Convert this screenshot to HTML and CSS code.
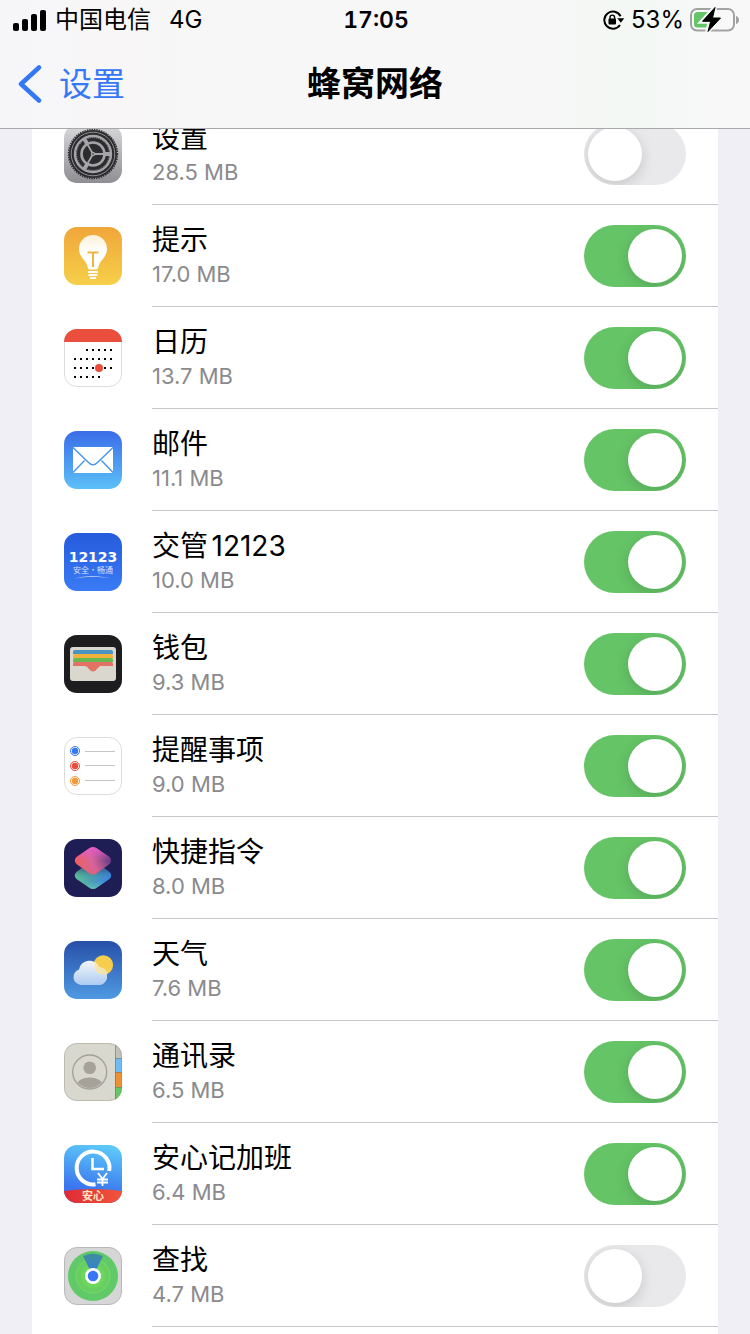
FILE: index.html
```html
<!DOCTYPE html>
<html lang="zh-CN">
<head>
  <meta charset="UTF-8">
  <meta name="viewport" content="width=device-width, initial-scale=1">
  <title>蜂窝网络</title>
  <link rel="stylesheet" href="styles.css">
</head>
<body>
  <header class="topbar">
    <div class="status">
      <div class="status-left">
        <svg class="signal" width="33" height="22" viewBox="0 0 33 22">
          <rect x="0" y="14" width="6" height="8" rx="2"/>
          <rect x="9" y="10" width="6" height="12" rx="2"/>
          <rect x="18" y="5" width="6" height="17" rx="2"/>
          <rect x="27" y="1" width="6" height="21" rx="2"/>
        </svg>
        <span>中国电信</span>
        <span class="network">4G</span>
      </div>
      <time class="clock">17:05</time>
      <div class="status-right">
        <svg width="22" height="20" viewBox="0 0 22 20">
          <path d="M17.6 6.300A8.600 8.600 0 1 0 17 15" fill="none" stroke="#000" stroke-width="2"/>
          <path d="M14.300 8.200h7L17.800 12.800z"/>
          <rect x="5.500" y="8.500" width="7.500" height="6" rx="1"/>
          <path d="M7 9V7.400a2.300 2.300 0 0 1 4.600 0V9" fill="none" stroke="#000" stroke-width="1.400"/>
        </svg>
        <span>53%</span>
        <svg width="49" height="26" viewBox="0 0 49 26">
          <rect x="1" y="2" width="43" height="21.500" rx="6" fill="none" stroke="#a1a3a2" stroke-width="2"/>
          <path d="M46 9q3 .8 3 4t-3 4z" fill="#a1a3a2"/>
          <rect x="4" y="5" width="20" height="15.500" rx="3.500" fill="#65c466"/>
          <path d="M25 0 11.500 14.800h8.200L17.200 25 31.500 10.500h-8.200z" stroke="#f6f9f6" stroke-width="4" fill="#f6f9f6"/>
          <path d="M25 .5 12.500 14.300h8.200L18 24.500 30.500 11h-8z" stroke="#000" stroke-width="1" stroke-linejoin="round"/>
        </svg>
      </div>
    </div>
    <nav class="nav">
      <a class="back" href="#">
        <svg width="24" height="40" viewBox="0 0 24 40">
          <path d="M21 3.500 3 20l18 16.500" fill="none" stroke="#3478f6" stroke-width="4.500" stroke-linecap="round" stroke-linejoin="round"/>
        </svg>
        设置
      </a>
      <h1>蜂窝网络</h1>
    </nav>
  </header>

  <ul class="apps">
    <li class="app">
      <svg class="icon" viewBox="0 0 58 58">
        <defs>
          <linearGradient id="gear-bg" x2="0" y2="1"><stop stop-color="#d9d9dc"/><stop offset="1" stop-color="#8e8e93"/></linearGradient>
        </defs>
        <rect width="58" height="58" rx="13" fill="url(#gear-bg)"/>
        <circle cx="29" cy="29" r="24" fill="#2c2c2e"/>
        <circle cx="29" cy="29" r="24.400" fill="none" stroke="#2c2c2e" stroke-width="1.600" stroke-dasharray="1.400 1"/>
        <circle cx="29" cy="29" r="21.800" fill="none" stroke="#8f8f93" stroke-width="1"/>
        <circle cx="29" cy="29" r="18" fill="none" stroke="#a5a5a9" stroke-width="2.400"/>
        <circle cx="29" cy="29" r="16.400" fill="none" stroke="#a5a5a9" stroke-width="1" stroke-dasharray=".9 1.100"/>
        <circle cx="29" cy="29" r="11.500" fill="none" stroke="#a5a5a9" stroke-width="2.600"/>
        <g stroke="#a5a5a9" stroke-width="1.800">
          <path d="M29 29h18M29 29l-9-15.600M29 29l-9 15.600"/>
          <path stroke-width="4" d="M41 29h5M23 18.600l-2.500-4.300M23 39.400l-2.500 4.300"/>
        </g>
        <circle cx="29" cy="29" r="2.200" fill="#a5a5a9"/>
        <circle cx="29" cy="29" r=".8" fill="#2c2c2e"/>
      </svg>
      <label class="info" for="app-settings"><span class="name">设置</span><span class="usage">28.5 MB</span></label>
      <input class="switch" id="app-settings" type="checkbox">
    </li>
    <li class="app">
      <svg class="icon" viewBox="0 0 58 58">
        <defs>
          <linearGradient id="tips-bg" x2="0" y2="1"><stop stop-color="#f0a63a"/><stop offset="1" stop-color="#f6cf49"/></linearGradient>
          <linearGradient id="tips-bulb" x2="0" y2="1"><stop stop-color="#fdf1d9"/><stop offset=".5" stop-color="#fff"/></linearGradient>
        </defs>
        <rect width="58" height="58" rx="13" fill="url(#tips-bg)"/>
        <path d="M29 8a14 14 0 0 0-14 14c0 8 7 11 8.500 17.500q.5 3 2.500 3h6q2 0 2.500-3C36 33 43 30 43 22A14 14 0 0 0 29 8z" fill="url(#tips-bulb)"/>
        <path d="M23.500 25.500h11M29 25.500v14.500" fill="none" stroke="#f1b63f" stroke-width="2"/>
        <path d="M24 45h10M24.500 48h9M26 51h6" stroke="#fff" stroke-width="2"/>
      </svg>
      <label class="info" for="app-tips"><span class="name">提示</span><span class="usage">17.0 MB</span></label>
      <input class="switch" id="app-tips" type="checkbox" checked>
    </li>
    <li class="app">
      <svg class="icon" viewBox="0 0 58 58">
        <rect x=".5" y=".5" width="57" height="57" rx="12.500" fill="#fff" stroke="#dcdcdc"/>
        <path d="M0 13A13 13 0 0 1 13 0h32a13 13 0 0 1 13 13z" fill="#e94f3c"/>
        <g stroke="#000" stroke-width="2" stroke-dasharray="2 4">
          <path d="M22 21h26M10 30h38M10 39h38M10 48h26"/>
        </g>
        <circle cx="35" cy="39" r="4" fill="#eb4d3d"/>
      </svg>
      <label class="info" for="app-calendar"><span class="name">日历</span><span class="usage">13.7 MB</span></label>
      <input class="switch" id="app-calendar" type="checkbox" checked>
    </li>
    <li class="app">
      <svg class="icon" viewBox="0 0 58 58">
        <defs>
          <linearGradient id="mail-bg" x2="0" y2="1"><stop stop-color="#3a6de8"/><stop offset="1" stop-color="#5cc0f8"/></linearGradient>
        </defs>
        <rect width="58" height="58" rx="13" fill="url(#mail-bg)"/>
        <rect x="9" y="16" width="40" height="26" rx="1" fill="#fff"/>
        <path d="m9 16.500 15.500 15q4.500 4.500 9 0l15.500-15M9 41.500l11.500-12M49 41.500l-11.500-12" fill="none" stroke="#4b96ef" stroke-width="1.500"/>
      </svg>
      <label class="info" for="app-mail"><span class="name">邮件</span><span class="usage">11.1 MB</span></label>
      <input class="switch" id="app-mail" type="checkbox" checked>
    </li>
    <li class="app">
      <svg class="icon" viewBox="0 0 58 58">
        <defs>
          <linearGradient id="traffic-bg" x2="0" y2="1"><stop stop-color="#255bdc"/><stop offset="1" stop-color="#3a7bf5"/></linearGradient>
        </defs>
        <rect width="58" height="58" rx="13" fill="url(#traffic-bg)"/>
        <text class="traffic-number" x="29" y="29" fill="#fff">12123</text>
        <text class="traffic-motto" x="29" y="40" fill="#d5e1fb">安全·畅通</text>
        <path d="M10 45.500q18-5 37 0-18-3.600-37 0z" fill="#d5e1fb"/>
      </svg>
      <label class="info" for="app-traffic"><span class="name">交管12123</span><span class="usage">10.0 MB</span></label>
      <input class="switch" id="app-traffic" type="checkbox" checked>
    </li>
    <li class="app">
      <svg class="icon" viewBox="0 0 58 58">
        <rect width="58" height="58" rx="13" fill="#1d1d1f"/>
        <rect x="6" y="12" width="46" height="34" rx="3" fill="#dad7ce"/>
        <path d="M9 19v-2q0-2 2-2h36q2 0 2 2v2z" fill="#4a94c4"/>
        <path d="M9 23v-2q0-2 2-2h36q2 0 2 2v2z" fill="#f2b13c"/>
        <path d="M9 27v-2q0-2 2-2h36q2 0 2 2v2z" fill="#67b84f"/>
        <path d="M9 31v-2q0-2 2-2h36q2 0 2 2v2H37q-2 0-3.500 2.500-4.500 6-9 0Q23 31 21 31z" fill="#e27364"/>
      </svg>
      <label class="info" for="app-wallet"><span class="name">钱包</span><span class="usage">9.3 MB</span></label>
      <input class="switch" id="app-wallet" type="checkbox" checked>
    </li>
    <li class="app">
      <svg class="icon" viewBox="0 0 58 58">
        <rect x=".5" y=".5" width="57" height="57" rx="12.500" fill="#fff" stroke="#dcdcdc"/>
        <g fill="none" stroke-width="1">
          <circle cx="11" cy="14" r="4.500" stroke="#3478f6"/>
          <circle cx="11" cy="29" r="4.500" stroke="#eb4d3d"/>
          <circle cx="11" cy="44" r="4.500" stroke="#f19a37"/>
        </g>
        <circle cx="11" cy="14" r="3.200" fill="#3478f6"/>
        <circle cx="11" cy="29" r="3.200" fill="#eb4d3d"/>
        <circle cx="11" cy="44" r="3.200" fill="#f19a37"/>
        <path d="M21 14.500h30M21 28.500h30M21 43.500h30" stroke="#c4c4c6"/>
      </svg>
      <label class="info" for="app-reminders"><span class="name">提醒事项</span><span class="usage">9.0 MB</span></label>
      <input class="switch" id="app-reminders" type="checkbox" checked>
    </li>
    <li class="app">
      <svg class="icon" viewBox="0 0 58 58">
        <defs>
          <linearGradient id="cut-bottom" x1="0" y1=".3" x2="1" y2=".5"><stop stop-color="#5ecb94"/><stop offset=".45" stop-color="#4e9cb0"/><stop offset="1" stop-color="#3478f6"/></linearGradient>
          <linearGradient id="cut-shade" x2="0" y2="1"><stop offset=".3" stop-color="#33507e" stop-opacity=".6"/><stop offset=".7" stop-color="#58d0a0" stop-opacity=".1"/><stop offset="1" stop-color="#7be0a8" stop-opacity=".6"/></linearGradient>
          <linearGradient id="cut-top" x1="0" y1=".7" x2="1" y2=".5"><stop stop-color="#f0604f"/><stop offset=".5" stop-color="#d7659a"/><stop offset="1" stop-color="#5c3a80"/></linearGradient>
          <linearGradient id="cut-glow" x2="0" y2="1"><stop stop-color="#e85bc8"/><stop offset=".5" stop-color="#e85bc8" stop-opacity="0"/><stop offset="1" stop-color="#e0625c" stop-opacity=".5"/></linearGradient>
        </defs>
        <rect width="58" height="58" rx="13" fill="#1e1e54"/>
        <path d="M25 24 12.500 33q-3.500 3.500 0 7L25 48.500q4 3 8 0L45.500 40q3.500-3.500 0-7L33 24q-4-3-8 0z" fill="url(#cut-bottom)"/>
        <path d="M25 24 12.500 33q-3.500 3.500 0 7L25 48.500q4 3 8 0L45.500 40q3.500-3.500 0-7L33 24q-4-3-8 0z" fill="url(#cut-shade)"/>
        <path d="M25 9.500 12.500 18q-3.500 3.500 0 7L25 34q4 3 8 0l12.500-9q3.500-3.500 0-7L33 9.500q-4-3-8 0z" fill="url(#cut-top)"/>
        <path d="M25 9.500 12.500 18q-3.500 3.500 0 7L25 34q4 3 8 0l12.500-9q3.500-3.500 0-7L33 9.500q-4-3-8 0z" fill="url(#cut-glow)"/>
      </svg>
      <label class="info" for="app-shortcuts"><span class="name">快捷指令</span><span class="usage">8.0 MB</span></label>
      <input class="switch" id="app-shortcuts" type="checkbox" checked>
    </li>
    <li class="app">
      <svg class="icon" viewBox="0 0 58 58">
        <defs>
          <linearGradient id="sky" x2="0" y2="1"><stop stop-color="#2750a8"/><stop offset="1" stop-color="#4f9ae2"/></linearGradient>
          <linearGradient id="cloud" x2="0" y2="1"><stop stop-color="#fff"/><stop offset="1" stop-color="#b4d0f2"/></linearGradient>
        </defs>
        <rect width="58" height="58" rx="13" fill="url(#sky)"/>
        <circle cx="39.300" cy="24" r="9.800" fill="#f6cd4c"/>
        <path d="M17 44a8 8 0 0 1-2-15.600A10.500 10.500 0 0 1 35 26 9.200 9.200 0 0 1 36.500 44z" fill="url(#cloud)" fill-opacity=".94"/>
        <path d="M31 20.500a10.500 10.500 0 0 1 4 5.500 9.200 9.200 0 0 1 9 6.500q-6 3-11-1-4-5-2-11z" fill="#fae29a" fill-opacity=".7"/>
      </svg>
      <label class="info" for="app-weather"><span class="name">天气</span><span class="usage">7.6 MB</span></label>
      <input class="switch" id="app-weather" type="checkbox" checked>
    </li>
    <li class="app">
      <svg class="icon" viewBox="0 0 58 58">
        <defs>
          <clipPath id="card"><rect width="58" height="58" rx="13"/></clipPath>
          <clipPath id="portrait"><circle cx="25.700" cy="29" r="16"/></clipPath>
        </defs>
        <g clip-path="url(#card)">
          <rect width="58" height="58" fill="#d8d8ce"/>
          <rect x="51" width="7" height="15" fill="#c2c1b8"/>
          <rect x="51" y="15" width="7" height="14" fill="#6fbcf5"/>
          <rect x="51" y="29" width="7" height="15" fill="#ed9032"/>
          <rect x="51" y="44" width="7" height="14" fill="#62c963"/>
          <path d="M51.500 0v58M51 15.500h7M51 29.500h7M51 44.500h7" stroke="#77776c" stroke-opacity=".6"/>
        </g>
        <rect x=".5" y=".5" width="57" height="57" rx="12.500" fill="none" stroke="#8a8a80" stroke-opacity=".35"/>
        <circle cx="25.700" cy="29" r="17" fill="none" stroke="#a7a299" stroke-width="1.400"/>
        <g clip-path="url(#portrait)" fill="#a7a299">
          <circle cx="25.700" cy="24.700" r="6.300"/>
          <ellipse cx="25.700" cy="42.500" rx="13" ry="8"/>
        </g>
      </svg>
      <label class="info" for="app-contacts"><span class="name">通讯录</span><span class="usage">6.5 MB</span></label>
      <input class="switch" id="app-contacts" type="checkbox" checked>
    </li>
    <li class="app">
      <svg class="icon" viewBox="0 0 58 58">
        <defs>
          <linearGradient id="work-bg" x1=".6" x2=".4" y2="1"><stop stop-color="#5cc8f8"/><stop offset=".8" stop-color="#3a74ee"/></linearGradient>
          <linearGradient id="work-band" x2="1"><stop stop-color="#df2a35"/><stop offset="1" stop-color="#f0563c"/></linearGradient>
        </defs>
        <rect width="58" height="58" rx="13" fill="url(#work-bg)"/>
        <path d="M0 46q29-4 58 0A13 13 0 0 1 45 58H13A13 13 0 0 1 0 46z" fill="url(#work-band)"/>
        <path d="M31.500 39.200A16.400 16.400 0 1 1 45.200 26" fill="none" stroke="#fff" stroke-width="4"/>
        <path d="M28.500 13v11H40" fill="none" stroke="#fff" stroke-width="2.500"/>
        <path d="m34 28 4.500 6 4.500-6M33 34.500h11M33 37.500h11M38.500 34v7" fill="none" stroke="#fff" stroke-width="1.800"/>
        <text class="work-label" x="29" y="55" fill="#ffe6c4">安心</text>
      </svg>
      <label class="info" for="app-overtime"><span class="name">安心记加班</span><span class="usage">6.4 MB</span></label>
      <input class="switch" id="app-overtime" type="checkbox" checked>
    </li>
    <li class="app">
      <svg class="icon" viewBox="0 0 58 58">
        <defs>
          <linearGradient id="beam" x2="0" y2="1"><stop stop-color="#3f8f9c"/><stop offset=".7" stop-color="#3a7fd0"/></linearGradient>
        </defs>
        <rect x=".5" y=".5" width="57" height="57" rx="12.500" fill="#d6d6d6" stroke="#b9b9b9"/>
        <circle cx="29" cy="29" r="25" fill="#5fca67"/>
        <circle cx="29" cy="29" r="17" fill="#66cf60" stroke="#7bd96c"/>
        <circle cx="29" cy="29" r="12" fill="#6dd65f"/>
        <path d="M29 29 19 9q10-5 20 0z" fill="url(#beam)"/>
        <circle cx="29" cy="29" r="8" fill="#fff"/>
        <circle cx="29" cy="29" r="5.300" fill="#3478f6"/>
      </svg>
      <label class="info" for="app-find"><span class="name">查找</span><span class="usage">4.7 MB</span></label>
      <input class="switch" id="app-find" type="checkbox">
    </li>
  </ul>
</body>
</html>
```

FILE: styles.css
```css
* {
  box-sizing: border-box;
}

body {
  margin: 0;
  min-height: 100vh;
  display: flex;
  flex-direction: column;
  background: #f0eff5;
  color: #000;
  font-family: Inter, "Noto Sans CJK SC", sans-serif;
}

.topbar {
  position: fixed;
  top: 0;
  left: 0;
  right: 0;
  z-index: 1;
  height: 129px;
  background: linear-gradient(to right, #f6f6f9, #f8f6f7 14%, #f7f7f7 30%, #f7f7f7 72%, #f3f8f4 84%, #f8f8f9 95%);
  border-bottom: 1px solid #a9a9ab;
  line-height: 1;
}

.status {
  display: grid;
  grid-template-columns: 1fr auto 1fr;
  align-items: center;
  height: 40px;
  padding: 0 11px 0 13px;
  font-size: 24px;
}

.status-left,
.status-right {
  display: flex;
  align-items: center;
}

.signal {
  margin-right: 9px;
}

.network {
  margin-left: 18px;
}

.clock {
  font-size: 23px;
  font-weight: 600;
  font-variant-numeric: tabular-nums;
}

.status-right {
  justify-content: flex-end;
  gap: 6px;
}

.nav {
  display: grid;
  grid-template-columns: 1fr auto 1fr;
  align-items: center;
  height: 88px;
  padding: 0 18px;
}

.back {
  display: flex;
  align-items: center;
  gap: 17px;
  color: #3478f6;
  font-size: 33px;
  text-decoration: none;
}

h1 {
  margin: 0;
  font-size: 34px;
  font-weight: 600;
}

.apps {
  flex: 1;
  margin: 0 32px;
  padding: 103px 0 0;
  background: #fff;
  list-style: none;
}

.app {
  display: flex;
  align-items: center;
  height: 102px;
  padding: 0 32px;
  background: linear-gradient(#c6c6c8, #c6c6c8) 120px 100% / 100% 1px no-repeat;
}

.icon {
  width: 58px;
  height: 58px;
  margin-right: 30px;
}

.info {
  flex: 1;
  display: flex;
  flex-direction: column;
}

.name {
  font-size: 28px;
  line-height: 36px;
  text-autospace: normal;
}

.usage {
  color: #8a8a8e;
  font-size: 22px;
  line-height: 32px;
}

.switch {
  appearance: none;
  width: 102px;
  height: 62px;
  margin: 0;
  padding: 4px;
  overflow: hidden;
  border-radius: 31px;
  background: #e9e9eb;
  cursor: pointer;
}

.switch::before {
  content: "";
  display: block;
  width: 54px;
  height: 54px;
  border-radius: 50%;
  background: #fff;
  box-shadow: 0 4px 14px rgba(0, 0, 0, 0.15);
}

.switch:checked {
  background: #65c466;
}

.switch:checked::before {
  margin-left: 40px;
}

.traffic-number {
  font: bold 14px "DejaVu Sans", sans-serif;
  text-anchor: middle;
}

.traffic-motto {
  font: 8px "Noto Sans CJK SC", sans-serif;
  text-anchor: middle;
}

.work-label {
  font: bold 11px "Noto Sans CJK SC", sans-serif;
  text-anchor: middle;
}
```
